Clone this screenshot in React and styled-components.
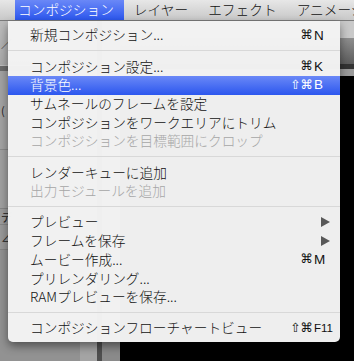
import React from 'react'
import styled, { createGlobalStyle } from 'styled-components'

const GlobalStyle = createGlobalStyle`
  html, body {
    margin: 0;
    padding: 0;
  }
  body {
    width: 354px;
    height: 361px;
    overflow: hidden;
    background: #8d8d8d;
    font-family: "Noto Sans CJK JP", "Noto Sans", sans-serif;
  }
`

const HIGHLIGHT = 'linear-gradient(#6a88f7, #2c57ee)'

const Screen = styled.div`
  position: relative;
  width: 354px;
  height: 361px;
  display: flex;
  flex-direction: column;
  overflow: hidden;
`

const MenuBar = styled.div`
  height: 20px;
  flex: none;
  display: flex;
  align-items: stretch;
  padding-left: 15px;
  background: linear-gradient(#e7e7e7, #c8c8c8);
  border-bottom: 1px solid #7b7b7b;
  font-size: 13.7px;
  font-weight: 300;
  line-height: 1;
  overflow: hidden;
`

const MenuTitle = styled.div`
  flex: none;
  display: flex;
  align-items: center;
  padding: 0 10px 0 3px;
  margin-right: 7px;
  white-space: nowrap;
  color: ${p => (p.$open ? '#fff' : '#111')};
  background: ${p => (p.$open ? HIGHLIGHT : 'transparent')};
`

const Workspace = styled.div`
  flex: 1;
  display: flex;
`

const LeftPanel = styled.div`
  width: 120px;
  flex: none;
  display: flex;
`

const PanelMain = styled.div`
  width: 80px;
  display: flex;
  flex-direction: column;
  background: #929292;
`

const PanelRow = styled.div`
  height: ${p => p.$h}px;
  flex: none;
  display: flex;
  align-items: center;
  padding-left: 1px;
  font-size: 11px;
  color: #222;
  background: ${p => p.$bg || 'transparent'};
  border-bottom: 1px solid ${p => p.$line || 'transparent'};
  overflow: hidden;
`

const PanelScroll = styled.div`
  width: 17px;
  background: #a4a4a4;
`

const PanelSplit = styled.div`
  width: 5px;
  background: #4f4f4f;
`

const PanelSide = styled.div`
  width: 18px;
  background: #8a8a8a;
`

const Viewer = styled.div`
  flex: 1;
  display: flex;
  flex-direction: column;
  background: #000;
`

const ViewerBand = styled.div`
  height: ${p => p.$h}px;
  flex: none;
  background: ${p => p.$bg};
`

const Dropdown = styled.div`
  position: absolute;
  top: 21px;
  left: 8px;
  width: 332px;
  padding: 5px 0 4px;
  background: rgba(243, 243, 243, 0.98);
  border-radius: 0 0 5px 5px;
  box-shadow: 0 4px 10px rgba(0, 0, 0, 0.45);
  font-size: 13.7px;
  font-weight: 300;
  line-height: 1;
`

const Item = styled.div`
  height: 18.7px;
  display: flex;
  align-items: center;
  padding: 0 8px 0 22px;
  white-space: nowrap;
  color: ${p => (p.$active ? '#fff' : p.$disabled ? '#a6a6a6' : '#111')};
  background: ${p => (p.$active ? HIGHLIGHT : 'transparent')};
`

const Label = styled.span`
  flex: 1;
`

const Mods = styled.span`
  width: 44px;
  text-align: right;
  font-family: "DejaVu Sans", sans-serif;
  font-size: 12.5px;
  font-weight: 400;
`

const Key = styled.span`
  width: 18px;
  display: flex;
  justify-content: ${p => (p.$end ? 'flex-end' : 'flex-start')};
  padding-left: 1px;
  font-family: "Liberation Sans", Arial, sans-serif;
  font-size: ${p => (p.$small ? '11.5px' : '13.5px')};
  font-weight: 400;
`

const Arrow = styled.span`
  width: 0;
  height: 0;
  margin-right: 2px;
  border-left: 9px solid #585858;
  border-top: 5px solid transparent;
  border-bottom: 5px solid transparent;
`

const Separator = styled.div`
  height: 12.5px;
  display: flex;
  align-items: center;
  &::after {
    content: '';
    flex: 1;
    height: 1px;
    background: #d8d8d8;
  }
`

const sections = [
  [{ label: '新規コンポジション...', mods: '⌘', key: 'N' }],
  [
    { label: 'コンポジション設定...', mods: '⌘', key: 'K' },
    { label: '背景色...', mods: '⇧⌘', key: 'B', active: true },
    { label: 'サムネールのフレームを設定' },
    { label: 'コンポジションをワークエリアにトリム' },
    { label: 'コンポジションを目標範囲にクロップ', disabled: true },
  ],
  [
    { label: 'レンダーキューに追加' },
    { label: '出力モジュールを追加', disabled: true },
  ],
  [
    { label: 'プレビュー', submenu: true },
    { label: 'フレームを保存', submenu: true },
    { label: 'ムービー作成...', mods: '⌘', key: 'M' },
    { label: 'プリレンダリング...' },
    { label: 'RAMプレビューを保存...' },
  ],
  [{ label: 'コンポジションフローチャートビュー', mods: '⇧⌘', key: 'F11', small: true }],
]

function MenuItem({ item }) {
  return (
    <Item $active={item.active} $disabled={item.disabled}>
      <Label>{item.label}</Label>
      <Mods>{item.mods}</Mods>
      {item.submenu ? (
        <Key $end>
          <Arrow />
        </Key>
      ) : (
        <Key $small={item.small}>{item.key}</Key>
      )}
    </Item>
  )
}

export default function App() {
  return (
    <>
      <GlobalStyle />
      <Screen>
        <MenuBar>
          <MenuTitle $open>コンポジション</MenuTitle>
          <MenuTitle>レイヤー</MenuTitle>
          <MenuTitle>エフェクト</MenuTitle>
          <MenuTitle>アニメーション</MenuTitle>
        </MenuBar>
        <Workspace>
          <LeftPanel>
            <PanelMain>
              <PanelRow $h={44} $bg="linear-gradient(#bdbdbd, #a9a9a9)">／</PanelRow>
              <PanelRow $h={4} $bg="#6c6c6c" />
              <PanelRow $h={78} $bg="#a3a3a3" $line="#8a8a8a">(</PanelRow>
              <PanelRow $h={58} $bg="#a0a0a0" $line="#858585" />
              <PanelRow $h={15} $bg="#9c9c9c" $line="#868686">デ</PanelRow>
              <PanelRow $h={24} $bg="#999" $line="#848484">∠</PanelRow>
            </PanelMain>
            <PanelScroll />
            <PanelSplit />
            <PanelSide />
          </LeftPanel>
          <Viewer>
            <ViewerBand $h={17} $bg="#c9c9c9" />
            <ViewerBand $h={26} $bg="linear-gradient(#8e8e8e, #5c5c5c)" />
            <ViewerBand $h={5} $bg="#333" />
            <ViewerBand $h={7} $bg="#9a9a9a" />
          </Viewer>
        </Workspace>
        <Dropdown>
          {sections.map((group, i) => (
            <React.Fragment key={i}>
              {i > 0 && <Separator />}
              {group.map(item => (
                <MenuItem key={item.label} item={item} />
              ))}
            </React.Fragment>
          ))}
        </Dropdown>
      </Screen>
    </>
  )
}
